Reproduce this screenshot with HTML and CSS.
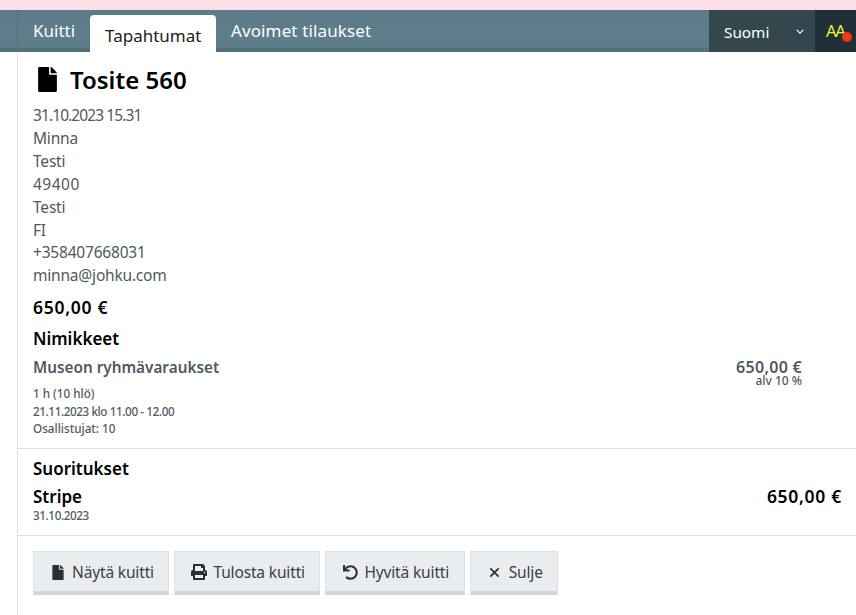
FILE: index.html
```
<!DOCTYPE html>
<html lang="fi">
<head>
<meta charset="utf-8">
<title>Tosite 560</title>
<link rel="stylesheet" href="styles.css">
</head>
<body>
<div class="topstrip"></div>
<div class="panel">
  <nav class="tabs">
    <div class="tablist">
      <a class="tab">Kuitti</a>
      <a class="tab active">Tapahtumat</a>
      <a class="tab wide-tab">Avoimet tilaukset</a>
    </div>
    <div class="lang"><span>Suomi</span>
      <svg class="chev" viewBox="0 0 10 6" width="8" height="5"><path d="M1 1l4 4 4-4" fill="none" stroke="#fff" stroke-width="1.6"/></svg>
    </div>
    <div class="aa">AA<span class="dot"></span></div>
  </nav>
  <main class="content">
    <section class="sec first">
      <h1 class="title">
        <svg class="titleicon" viewBox="0 0 384 512" width="19" height="25"><path d="M224 136V0H24C10.700 0 0 10.700 0 24v464c0 13.300 10.700 24 24 24h336c13.300 0 24-10.700 24-24V160H248c-13.200 0-24-10.800-24-24zm160-14.100v6.100H256V0h6.100c6.400 0 12.500 2.500 17 7l97.900 98c4.500 4.500 7 10.600 7 16.900z"/></svg>
        Tosite 560
      </h1>
      <div class="addr">
        <div class="date">31.10.2023 15.31</div>
        <div>Minna</div>
        <div>Testi</div>
        <div class="zip">49400</div>
        <div>Testi</div>
        <div>FI</div>
        <div>+358407668031</div>
        <div>minna@johku.com</div>
      </div>
      <div class="total">650,00 €</div>
      <h2 class="heading">Nimikkeet</h2>
      <div class="item">
        <div>
          <div class="itemname">Museon ryhmävaraukset</div>
          <div class="small itemmeta">
            <div>1 h (10 hlö)</div>
            <div class="tight">21.11.2023 klo 11.00 - 12.00</div>
            <div>Osallistujat: 10</div>
          </div>
        </div>
        <div class="itemprice">
          <div class="price">650,00 €</div>
          <div class="vat">alv 10 %</div>
        </div>
      </div>
    </section>
    <section class="sec pay">
      <h2 class="heading">Suoritukset</h2>
      <div class="payrow">
        <div>
          <div class="payname">Stripe</div>
          <div class="small paydate tight">31.10.2023</div>
        </div>
        <div class="payamount">650,00 €</div>
      </div>
    </section>
    <footer class="actions">
      <button class="btn"><span class="ic"><svg viewBox="0 0 384 512" width="12" height="15"><path d="M224 136V0H24C10.700 0 0 10.700 0 24v464c0 13.300 10.700 24 24 24h336c13.300 0 24-10.700 24-24V160H248c-13.200 0-24-10.800-24-24zm160-14.100v6.100H256V0h6.100c6.400 0 12.500 2.500 17 7l97.900 98c4.500 4.500 7 10.600 7 16.900z"/></svg></span>Näytä kuitti</button>
      <button class="btn"><span class="ic"><svg viewBox="0 0 512 512" width="16" height="16"><path d="M448 192V77.250c0-8.490-3.370-16.620-9.370-22.630L393.370 9.370c-6-6-14.140-9.370-22.630-9.370H96C78.330 0 64 14.330 64 32v160c-35.350 0-64 28.650-64 64v112c0 8.840 7.160 16 16 16h48v96c0 17.670 14.330 32 32 32h320c17.670 0 32-14.330 32-32v-96h48c8.840 0 16-7.160 16-16V256c0-35.350-28.650-64-64-64zm-64 256H128v-96h256v96zm0-224H128V64h192v48c0 8.840 7.160 16 16 16h48v96zm48 72c-13.250 0-24-10.750-24-24 0-13.270 10.750-24 24-24s24 10.730 24 24c0 13.250-10.750 24-24 24z"/></svg></span>Tulosta kuitti</button>
      <button class="btn"><span class="ic"><svg viewBox="0 0 512 512" width="15" height="15"><path d="M212.333 224.333H12c-6.627 0-12-5.373-12-12V12C0 5.373 5.373 0 12 0h48c6.627 0 12 5.373 12 12v78.112C117.773 39.279 184.026 7.330 257.500 8 394.500 9.300 504.300 120.100 504 257.100 503.700 393.800 392.800 504 256 504c-64.100 0-122.500-24.200-166.500-64-5.100-4.600-5.300-12.500-.5-17.400l34-34c4.500-4.500 11.700-4.700 16.400-.5C170.800 415.300 211.400 432 256 432c97.300 0 176-78.700 176-176 0-97.400-78.700-176-176-176-58.500 0-110.300 28.400-142.300 72.300h98.600c6.627 0 12 5.373 12 12v48c0 6.600-5.400 12-12 12z"/></svg></span>Hyvitä kuitti</button>
      <button class="btn"><span class="ic"><svg viewBox="0 0 12 12" width="11" height="11"><path d="M1.500 1.500l9 9m0-9l-9 9" fill="none" stroke="#2b2f33" stroke-width="1.900"/></svg></span>Sulje</button>
    </footer>
  </main>
</div>
</body>
</html>
```

FILE: styles.css
```
* { box-sizing: border-box; }
html, body { margin: 0; padding: 0; height: 100%; overflow: hidden; }
body { background: #fff; font-family: "Noto Sans", "Open Sans", sans-serif; color: #4f5a60; font-size: 16px; }
.topstrip { height: 10px; background: #fcdfe8; }
.panel { margin-left: 17px; border-left: 1px solid #e2e4e6; height: 605px; }
.tabs { display: flex; height: 42px; margin-left: -18px; background: linear-gradient(90deg, transparent 17px, #54707c 17px, #54707c 18px, transparent 18px), linear-gradient(#5d7a88 0, #5f7e8b 37px, #557079 38px, #557079 100%); }
.tablist { display: flex; flex: 1; padding-left: 18px; align-items: flex-end; }
.tab { color: #fff; font-size: 17px; padding: 0 15px; height: 42px; line-height: 42px; }
.tab.active { background: #fff; color: #1a1d20; height: 37px; line-height: 42px; border-radius: 4px 4px 0 0; padding: 0 14.500px 0 15px; }
.wide-tab { letter-spacing: 0.130px; }
.lang { width: 106px; background: #34474f; color: #fff; font-size: 15.300px; display: flex; align-items: center; justify-content: space-between; padding: 1px 11px 0 15px; }
.aa { position: relative; width: 41px; background: #1f3039; color: #eaf52a; font-size: 16.500px; line-height: 42px; padding-left: 11px; letter-spacing: -1.200px; }
.dot { position: absolute; right: 4px; top: 22px; width: 10px; height: 10px; border-radius: 50%; background: #f03a0c; }
.chev { display: block; }
.sec { padding: 0 15px; }
.first { padding-bottom: 10px; border-bottom: 1px solid #dcdfe1; }
.title { margin: 0; display: flex; align-items: center; gap: 13px; color: #000; font-size: 24px; font-weight: 600; height: 57px; padding: 0 0 3px 5px; }
.titleicon { display: block; }
.addr { font-size: 15.500px; line-height: 22.900px; margin-top: -5px; letter-spacing: -0.200px; }
.date { letter-spacing: -0.900px; }
.zip { letter-spacing: 0.500px; }
.total { color: #000; font-weight: 600; font-size: 17.500px; letter-spacing: 0.700px; line-height: 24px; margin-top: 8px; }
.heading { margin: 8px 0 0; color: #000; font-size: 17px; font-weight: 600; line-height: 24px; }
.item { display: flex; justify-content: space-between; padding-right: 39px; }
.itemname { font-weight: 600; font-size: 15.300px; line-height: 24px; margin-top: 4px; }
.small { font-size: 11.700px; font-weight: 500; line-height: 17.500px; }
.tight { letter-spacing: -0.400px; }
.itemmeta { margin-top: 6px; }
.itemprice { text-align: right; margin-top: 4px; }
.price { font-weight: 600; font-size: 16px; letter-spacing: 0.300px; line-height: 16px; margin-top: 4px; }
.vat { font-size: 12px; font-weight: 500; line-height: 12px; }
.pay { border-bottom: 1px solid #dcdfe1; padding-top: 0; padding-right: 14px; padding-bottom: 12px; }
.payrow { display: flex; justify-content: space-between; margin-top: 5px; }
.payname { color: #000; font-weight: 600; font-size: 17px; line-height: 21px; }
.paydate { line-height: 16px; }
.payamount { color: #000; font-weight: 600; font-size: 17.500px; letter-spacing: 0.700px; line-height: 21px; }
.actions { display: flex; gap: 5px; padding: 15px 15px 0; }
.btn { display: flex; align-items: center; gap: 3px; height: 44px; padding: 2px 14.500px 0 13px; background: #eaedf0; border: 1px solid #dde1e5; border-bottom: 4px solid #cfd6dd; border-radius: 0; color: #3b4045; font: 400 15.500px "Noto Sans", sans-serif; letter-spacing: -0.150px; }
.ic { width: 22px; display: flex; justify-content: center; }
.ic svg { fill: #2b2f33; display: block; }
```
